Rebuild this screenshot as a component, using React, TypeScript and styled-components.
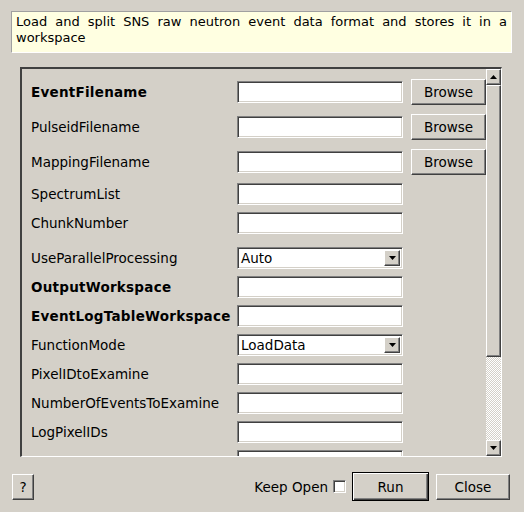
import React from 'react'
import styled, { createGlobalStyle, css } from 'styled-components'

const GlobalStyle = createGlobalStyle`
    html, body {
        margin: 0;
        padding: 0;
        background: #d4d0c8;
    }
    * {
        box-sizing: border-box;
    }
`

const raised = css`
    border: 1px solid;
    border-color: #ffffff #404040 #404040 #ffffff;
    box-shadow: inset -1px -1px 0 #808080;
    background: #d4d0c8;
`

const sunken = css`
    border: 1px solid;
    border-color: #808080 #ffffff #ffffff #808080;
    box-shadow: inset 1px 1px 0 #404040, inset -1px -1px 0 #d4d0c8;
    background: #ffffff;
`

type Row = {
    label: string
    bold?: boolean
    kind: 'text' | 'browse' | 'combo'
    value?: string
    extraGap?: boolean
}

// last row is cut off by the frame, only its field edge shows
const rows: Row[] = [
    { label: 'EventFilename', bold: true, kind: 'browse' },
    { label: 'PulseidFilename', kind: 'browse' },
    { label: 'MappingFilename', kind: 'browse' },
    { label: 'SpectrumList', kind: 'text' },
    { label: 'ChunkNumber', kind: 'text' },
    { label: 'UseParallelProcessing', kind: 'combo', value: 'Auto', extraGap: true },
    { label: 'OutputWorkspace', bold: true, kind: 'text' },
    { label: 'EventLogTableWorkspace', bold: true, kind: 'text' },
    { label: 'FunctionMode', kind: 'combo', value: 'LoadData' },
    { label: 'PixelIDtoExamine', kind: 'text' },
    { label: 'NumberOfEventsToExamine', kind: 'text' },
    { label: 'LogPixelIDs', kind: 'text' },
    { label: '', kind: 'text' },
]

function Arrow({ up }: { up?: boolean }) {
    return (
        <svg width='7' height='4' viewBox='0 0 7 4'>
            <polygon points={up ? '0,4 7,4 3.5,0' : '0,0 7,0 3.5,4'} fill='#000' />
        </svg>
    )
}

export default function App() {
    return (
        <Dialog>
            <GlobalStyle />
            <Description>
                Load and split SNS raw neutron event data format and stores it in a workspace
            </Description>
            <Frame>
                <Content>
                    {rows.map((row, i) => (
                        <PropRow key={i} $tall={row.kind === 'browse'} $extraGap={row.extraGap}>
                            <Label $bold={row.bold}>{row.label}</Label>
                            {row.kind === 'combo' ? (
                                <Combo>
                                    <ComboText>{row.value}</ComboText>
                                    <ComboButton><Arrow /></ComboButton>
                                </Combo>
                            ) : (
                                <TextField />
                            )}
                            {row.kind === 'browse' && <BrowseButton>Browse</BrowseButton>}
                        </PropRow>
                    ))}
                </Content>
                <ScrollBar>
                    <ScrollButton><Arrow up /></ScrollButton>
                    <Thumb />
                    <Trough />
                    <ScrollButton><Arrow /></ScrollButton>
                </ScrollBar>
            </Frame>
            <BottomBar>
                <Button $width={22}>?</Button>
                <Spacer />
                <KeepOpen>Keep Open</KeepOpen>
                <CheckBox />
                <DefaultButton>Run</DefaultButton>
                <Button $width={74}>Close</Button>
            </BottomBar>
        </Dialog>
    )
}

const Dialog = styled.div`
    width: 524px;
    height: 512px;
    display: flex;
    flex-direction: column;
    font-family: "DejaVu Sans", sans-serif;
    font-size: 13.5px;
    color: #000;
    overflow: hidden;
`

const Description = styled.div`
    margin: 11px 12px 0 11px;
    height: 42px;
    padding: 2px 4px 0 4px;
    background: #ffffe1;
    border: 1px solid;
    border-color: #a0a0a0 #ffffff #ffffff #a0a0a0;
    font-size: 13px;
    line-height: 16px;
    text-align: justify;
`

const Frame = styled.div`
    margin: 14px 22px 0 20px;
    height: 390px;
    display: flex;
    border-style: solid;
    border-width: 2px 1px 1px 2px;
    border-color: #404040 #ffffff #ffffff #404040;
    overflow: hidden;
`

const Content = styled.div`
    flex: 1;
    padding: 5px 0 0 9px;
    overflow: hidden;
`

const PropRow = styled.div<{ $tall?: boolean; $extraGap?: boolean }>`
    display: grid;
    grid-template-columns: 206px 166px 1fr;
    align-items: center;
    height: ${(p) => (p.$tall ? 35 : 29)}px;
    margin-top: ${(p) => (p.$extraGap ? 6 : 0)}px;
`

const Label = styled.div<{ $bold?: boolean }>`
    font-weight: ${(p) => (p.$bold ? 'bold' : 'normal')};
    letter-spacing: ${(p) => (p.$bold ? '0.25px' : '0')};
    white-space: nowrap;
`

const TextField = styled.div`
    ${sunken}
    height: 22px;
`

const Combo = styled.div`
    ${sunken}
    height: 22px;
    display: flex;
    align-items: stretch;
    padding: 2px 2px 2px 3px;
`

const ComboText = styled.div`
    flex: 1;
    line-height: 17px;
`

const ComboButton = styled.div`
    ${raised}
    width: 16px;
    display: flex;
    align-items: center;
    justify-content: center;
`

const Button = styled.div<{ $width: number }>`
    ${raised}
    width: ${(p) => p.$width}px;
    height: 26px;
    display: flex;
    align-items: center;
    justify-content: center;
`

const BrowseButton = styled(Button).attrs({ $width: 75 })`
    margin-left: 8px;
`

const DefaultButton = styled.div`
    width: 77px;
    height: 29px;
    border: 1px solid #000;
    display: flex;
    align-items: center;
    justify-content: center;
    background: #d4d0c8;
    box-shadow: inset 1px 1px 0 #ffffff, inset -1px -1px 0 #404040, inset -2px -2px 0 #808080;
    margin-right: 7px;
`

const ScrollBar = styled.div`
    width: 15px;
    display: flex;
    flex-direction: column;
`

const ScrollButton = styled.div`
    ${raised}
    height: 16px;
    display: flex;
    align-items: center;
    justify-content: center;
`

const Thumb = styled.div`
    ${raised}
    height: 272px;
`

const Trough = styled.div`
    flex: 1;
    background-color: #d4d0c8;
    background-image: repeating-conic-gradient(#ffffff 0 25%, #d4d0c8 0 50%);
    background-size: 2px 2px;
`

const BottomBar = styled.div`
    margin-top: 15px;
    height: 29px;
    padding: 0 14px 0 12px;
    display: flex;
    align-items: center;
`

const Spacer = styled.div`
    flex: 1;
`

const KeepOpen = styled.span`
    margin-right: 5px;
`

const CheckBox = styled.div`
    ${sunken}
    width: 13px;
    height: 13px;
    margin-right: 6px;
`
